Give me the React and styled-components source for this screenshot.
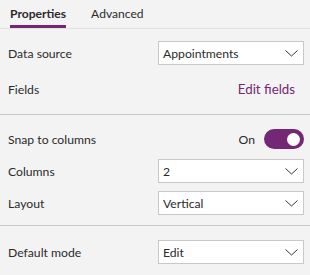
import React from 'react';
import styled, { createGlobalStyle } from 'styled-components';

const GlobalStyle = createGlobalStyle`
    body {
        margin: 0;
        background: #f3f3f3;
        font-family: "Segoe UI", Lato, "Liberation Sans", sans-serif;
        color: #2b2b2b;
    }
`;

const Panel = styled.div`
    width: 310px;
    height: 275px;
    background: #f3f3f3;
    font-size: 12.2px;
`;

const TabBar = styled.div`
    display: flex;
    height: 28px;
    padding-left: 10px;
    gap: 25px;
    border-bottom: 1px solid #e1e1e1;
`;

const Tab = styled.div`
    display: flex;
    align-items: center;
    height: 28px;
    box-sizing: border-box;
    padding-top: 1px;
    font-size: 12.1px;
    font-weight: ${props => props.active ? 700 : 400};
    border-bottom: 3px solid ${props => props.active ? '#742774' : 'transparent'};
`;

const Section = styled.div`
    display: flex;
    flex-direction: column;
    gap: ${props => props.gap}px;
    padding: ${props => props.top}px 6px ${props => props.bottom}px 8px;
    border-bottom: ${props => props.last ? 'none' : '1px solid #c8c8c8'};
`;

const Row = styled.div`
    display: flex;
    align-items: center;
    justify-content: space-between;
    height: 24px;
`;

const Label = styled.span`
    white-space: nowrap;
`;

const Dropdown = styled.div`
    display: flex;
    align-items: center;
    justify-content: space-between;
    width: 146px;
    height: 24px;
    box-sizing: border-box;
    padding: 0 5px 0 4px;
    background: #ffffff;
    border: 1px solid #c8c8c8;
`;

const LinkText = styled.span`
    color: #742774;
    font-size: 13.3px;
    margin-right: 9px;
`;

const ToggleWrap = styled.div`
    display: flex;
    align-items: center;
    gap: 9px;
`;

const Track = styled.div`
    display: flex;
    align-items: center;
    justify-content: flex-end;
    width: 40px;
    height: 20px;
    box-sizing: border-box;
    padding-right: 4px;
    border-radius: 10px;
    background: #742774;
`;

const Knob = styled.div`
    width: 13px;
    height: 13px;
    border-radius: 50%;
    background: #ffffff;
`;

const Chevron = () => (
    <svg width="13" height="7" viewBox="0 0 13 7">
        <path d="M0.5 0.5 L6.5 6 L12.5 0.5" fill="none" stroke="#333" strokeWidth="1" />
    </svg>
);

const Select = ({ value }) => (
    <Dropdown>
        <span>{value}</span>
        <Chevron />
    </Dropdown>
);

export default function App() {
    return (
        <Panel>
            <GlobalStyle />
            <TabBar>
                <Tab active>Properties</Tab>
                <Tab>Advanced</Tab>
            </TabBar>
            <Section top={12} bottom={13} gap={12}>
                <Row>
                    <Label>Data source</Label>
                    <Select value="Appointments" />
                </Row>
                <Row>
                    <Label>Fields</Label>
                    <LinkText>Edit fields</LinkText>
                </Row>
            </Section>
            <Section top={12} bottom={10} gap={8}>
                <Row>
                    <Label>Snap to columns</Label>
                    <ToggleWrap>
                        <span>On</span>
                        <Track><Knob /></Track>
                    </ToggleWrap>
                </Row>
                <Row>
                    <Label>Columns</Label>
                    <Select value="2" />
                </Row>
                <Row>
                    <Label>Layout</Label>
                    <Select value="Vertical" />
                </Row>
            </Section>
            <Section top={14} bottom={0} gap={0} last>
                <Row>
                    <Label>Default mode</Label>
                    <Select value="Edit" />
                </Row>
            </Section>
        </Panel>
    );
}
